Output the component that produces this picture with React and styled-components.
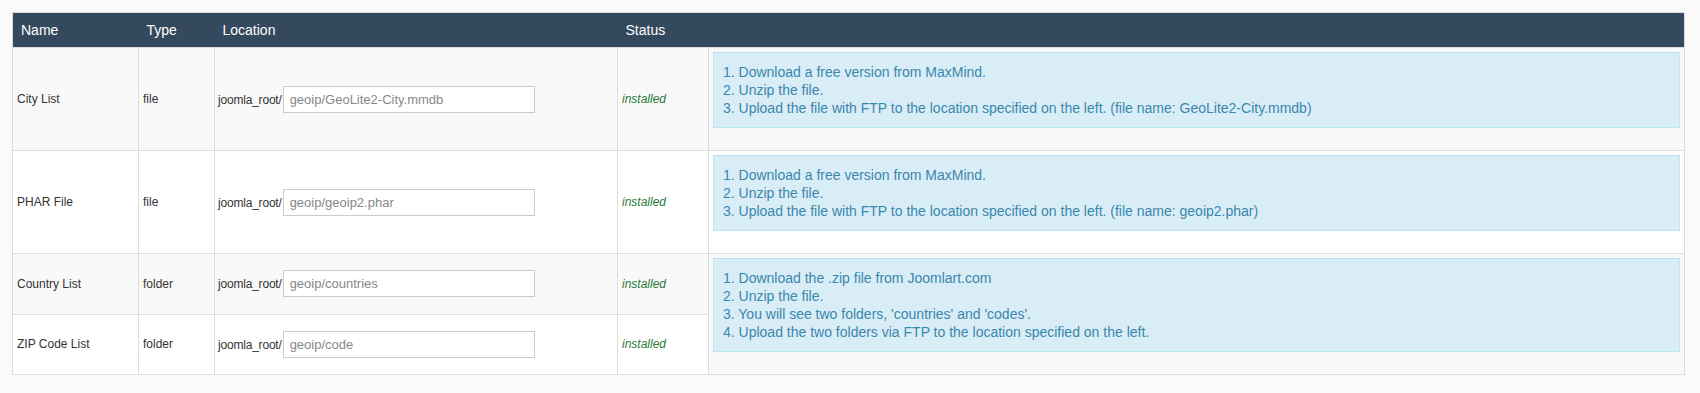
import React from "react";
import styled, { createGlobalStyle } from "styled-components";

const GlobalStyle = createGlobalStyle`
  html, body {
    margin: 0;
    padding: 0;
    background: #fafafa;
  }
  body {
    font-family: "Liberation Sans", Arial, sans-serif;
    font-size: 13px;
    line-height: 18px;
    color: #333;
  }
`;

const Wrapper = styled.div`
  padding: 12px 15px 0 12px;
`;

const Table = styled.table`
  width: 100%;
  border-collapse: collapse;
  border: 1px solid #ddd;
  table-layout: fixed;
`;

const Th = styled.th`
  background: #34495e;
  color: #fff;
  font-size: 14px;
  font-weight: normal;
  text-align: left;
  padding: 8px;
  line-height: 18px;
  border-bottom: 1px solid #ddd;
`;

const Row = styled.tr`
  background: ${(p) => (p.$striped ? "#f9f9f9" : "#fff")};
`;

const Td = styled.td`
  font-size: 12px;
  padding: 4px;
  vertical-align: middle;
  border: 1px solid #ddd;
  color: #333;
`;

const LocationCell = styled(Td)`
  padding-left: 3px;
  letter-spacing: -0.2px;
`;

const DescCell = styled(Td)`
  vertical-align: top;
`;

const PathInput = styled.input`
  box-sizing: border-box;
  width: 252px;
  height: 27px;
  margin: 0 0 0 1px;
  padding: 4px 6px;
  border: 1px solid #ccc;
  background: #fff;
  font-family: "Liberation Sans", Arial, sans-serif;
  font-size: 13px;
  letter-spacing: 0;
  color: #888;
  outline: none;
`;

const Status = styled.span`
  color: #2b7a3b;
  font-style: italic;
`;

const Note = styled.div`
  background: #d9edf7;
  border: 1px solid #bce8f1;
  border-top-color: #b7dfeb;
  color: #3a87ad;
  font-size: 14px;
  line-height: 18px;
  padding: 10px 9px;
  margin-bottom: 18px;
`;

const maxmindSteps = (file) => [
  "1. Download a free version from MaxMind.",
  "2. Unzip the file.",
  `3. Upload the file with FTP to the location specified on the left. (file name: ${file})`,
];

const joomlartSteps = [
  "1. Download the .zip file from Joomlart.com",
  "2. Unzip the file.",
  "3. You will see two folders, 'countries' and 'codes'.",
  "4. Upload the two folders via FTP to the location specified on the left.",
];

const rows = [
  { name: "City List", type: "file", path: "geoip/GeoLite2-City.mmdb", steps: maxmindSteps("GeoLite2-City.mmdb"), span: 1 },
  { name: "PHAR File", type: "file", path: "geoip/geoip2.phar", steps: maxmindSteps("geoip2.phar"), span: 1 },
  { name: "Country List", type: "folder", path: "geoip/countries", steps: joomlartSteps, span: 2 },
  { name: "ZIP Code List", type: "folder", path: "geoip/code", steps: null, span: 0 },
];

const Steps = ({ lines }) => (
  <Note>
    {lines.map((l, i) => (
      <div key={i}>{l}</div>
    ))}
  </Note>
);

const App = () => {
  return (
    <>
      <GlobalStyle />
      <Wrapper>
        <Table>
          <colgroup>
            <col style={{ width: 126 }} />
            <col style={{ width: 76 }} />
            <col style={{ width: 403 }} />
            <col style={{ width: 91 }} />
            <col />
          </colgroup>
          <thead>
            <tr>
              <Th>Name</Th>
              <Th>Type</Th>
              <Th>Location</Th>
              <Th>Status</Th>
              <Th></Th>
            </tr>
          </thead>
          <tbody>
            {rows.map((r, i) => (
              <Row key={r.name} $striped={i % 2 === 0}>
                <Td>{r.name}</Td>
                <Td>{r.type}</Td>
                <LocationCell>
                  joomla_root/
                  <PathInput readOnly value={r.path} />
                </LocationCell>
                <Td>
                  <Status>installed</Status>
                </Td>
                {r.span > 0 && (
                  <DescCell rowSpan={r.span}>
                    <Steps lines={r.steps} />
                  </DescCell>
                )}
              </Row>
            ))}
          </tbody>
        </Table>
      </Wrapper>
    </>
  );
};

export default App;
